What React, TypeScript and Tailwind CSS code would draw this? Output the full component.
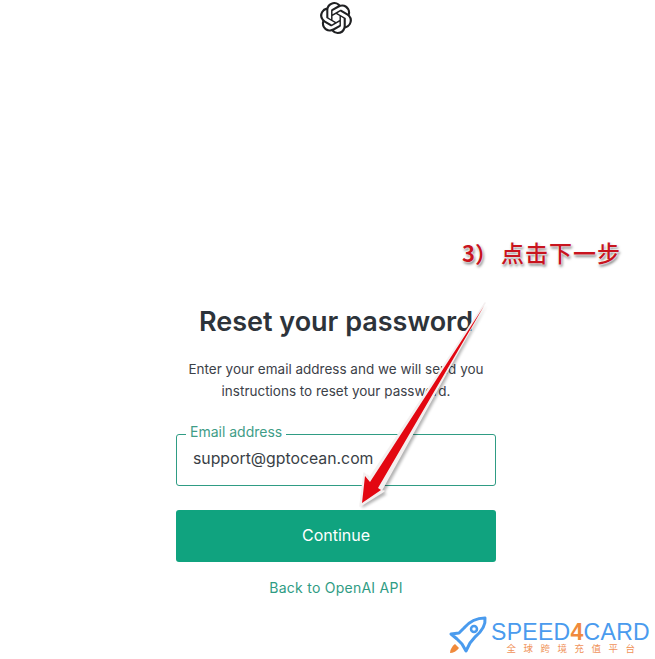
import React from "react";
import { SiOpenai } from "react-icons/si";

const sans = "font-['Inter','Liberation_Sans',sans-serif]";

export default function App() {
  return (
    <div className={`relative w-[655px] h-[659px] overflow-hidden bg-white ${sans}`}>
      <div className="flex flex-col items-center w-full pl-[17px]">
        <div className="pt-[2px] h-[34px]">
          <SiOpenai className="w-8 h-8 text-[#202123]" />
        </div>
        <div className="w-[320px] mt-[268px] flex flex-col items-center">
          <h1 className="text-[27px] leading-[40px] font-semibold text-[#2d333a] whitespace-nowrap">Reset your password</h1>
          <p className="mt-[16px] text-[13.5px] leading-[22px] text-[#3c4148] text-center w-[300px]">
            Enter your email address and we will send you instructions to reset your password.
          </p>
          <div className="relative mt-[32px] w-full h-[52px] border border-[#2f9c84] rounded-[3px] flex items-center pl-4">
            <span className="absolute -top-[13px] left-[9px] bg-white px-[4px] text-[14px] leading-[20px] text-[#3f9d87] whitespace-nowrap">Email address</span>
            <span className="text-[15.8px] text-[#3a3f46] whitespace-nowrap -mt-[2px]">support@gptocean.com</span>
          </div>
          <div className="mt-[24px] w-full h-[52px] rounded-[3px] bg-[#10a37f] flex items-center justify-center text-[16px] text-white pb-[2px]">Continue</div>
          <a className="mt-[16px] text-[14px] leading-[20px] text-[#2f9c84] tracking-[0.25px]">Back to OpenAI API</a>
        </div>
      </div>

      {/* annotation arrow */}
      <svg className="absolute left-0 top-0 pointer-events-none" width="655" height="659" viewBox="0 0 655 659">
        <polygon className="blur-[1.5px]" points="487,305 384,493 387,494 362,508 366,475 372,482" fill="#000" opacity="0.3" />
        <polygon points="485,303 381,491 384,491 360,506 364,473 369,479" fill="#f4f0f0" stroke="#f4f0f0" strokeWidth="1.5" strokeLinejoin="round" />
        <polygon points="484,306 378,488 381,490 362,503 365,476 370,482" fill="#e30711" />
      </svg>

      {/* annotation caption */}
      <div className="absolute left-[462px] top-[237px] flex items-center font-['Noto_Sans_CJK_SC',sans-serif] font-bold text-[#c8141e] [text-shadow:0_0_2px_#fff,0_0_2px_#fff,1px_2px_3px_rgba(0,0,0,0.6)] whitespace-nowrap">
        <span className="text-[22px] leading-[30px] w-[39px]">3）</span>
        <span className="text-[23px] leading-[30px] tracking-[1px] font-medium">点击下一步</span>
      </div>

      {/* watermark */}
      <div className="absolute left-[449px] top-[616px] flex items-start">
        <svg width="40" height="38" viewBox="0 0 40 38" fill="none">
          <path d="M36 2 C27 2 20 6 15 12 L10 17 L2 18 L8 23 L13 28 L17 35 L21 27 L26 21 C32 16 37 10 36 2 Z" stroke="#4a9bee" strokeWidth="3" strokeLinejoin="round" fill="#fff" />
          <circle cx="25" cy="13" r="3" stroke="#4a9bee" strokeWidth="2.5" />
          <path d="M6 28 C3 30 1 34 1 37 C4 37 8 35 10 32 Z" fill="#f08a3c" />
        </svg>
        <div className="ml-[2px] mt-[2px] flex flex-col items-center">
          <div className="text-[23px] leading-[28px] tracking-[0.3px] text-[#4a9bee] font-['Liberation_Sans',sans-serif] whitespace-nowrap">
            SPEED<span className="text-[#f08a3c] font-bold">4</span>CARD
          </div>
          <div className="-mt-[4px] text-[9.5px] leading-[12px] tracking-[7.5px] pl-[8px] text-[#f0935a] font-['Noto_Sans_CJK_SC',sans-serif] whitespace-nowrap">全球跨境充值平台</div>
        </div>
      </div>
    </div>
  );
}
